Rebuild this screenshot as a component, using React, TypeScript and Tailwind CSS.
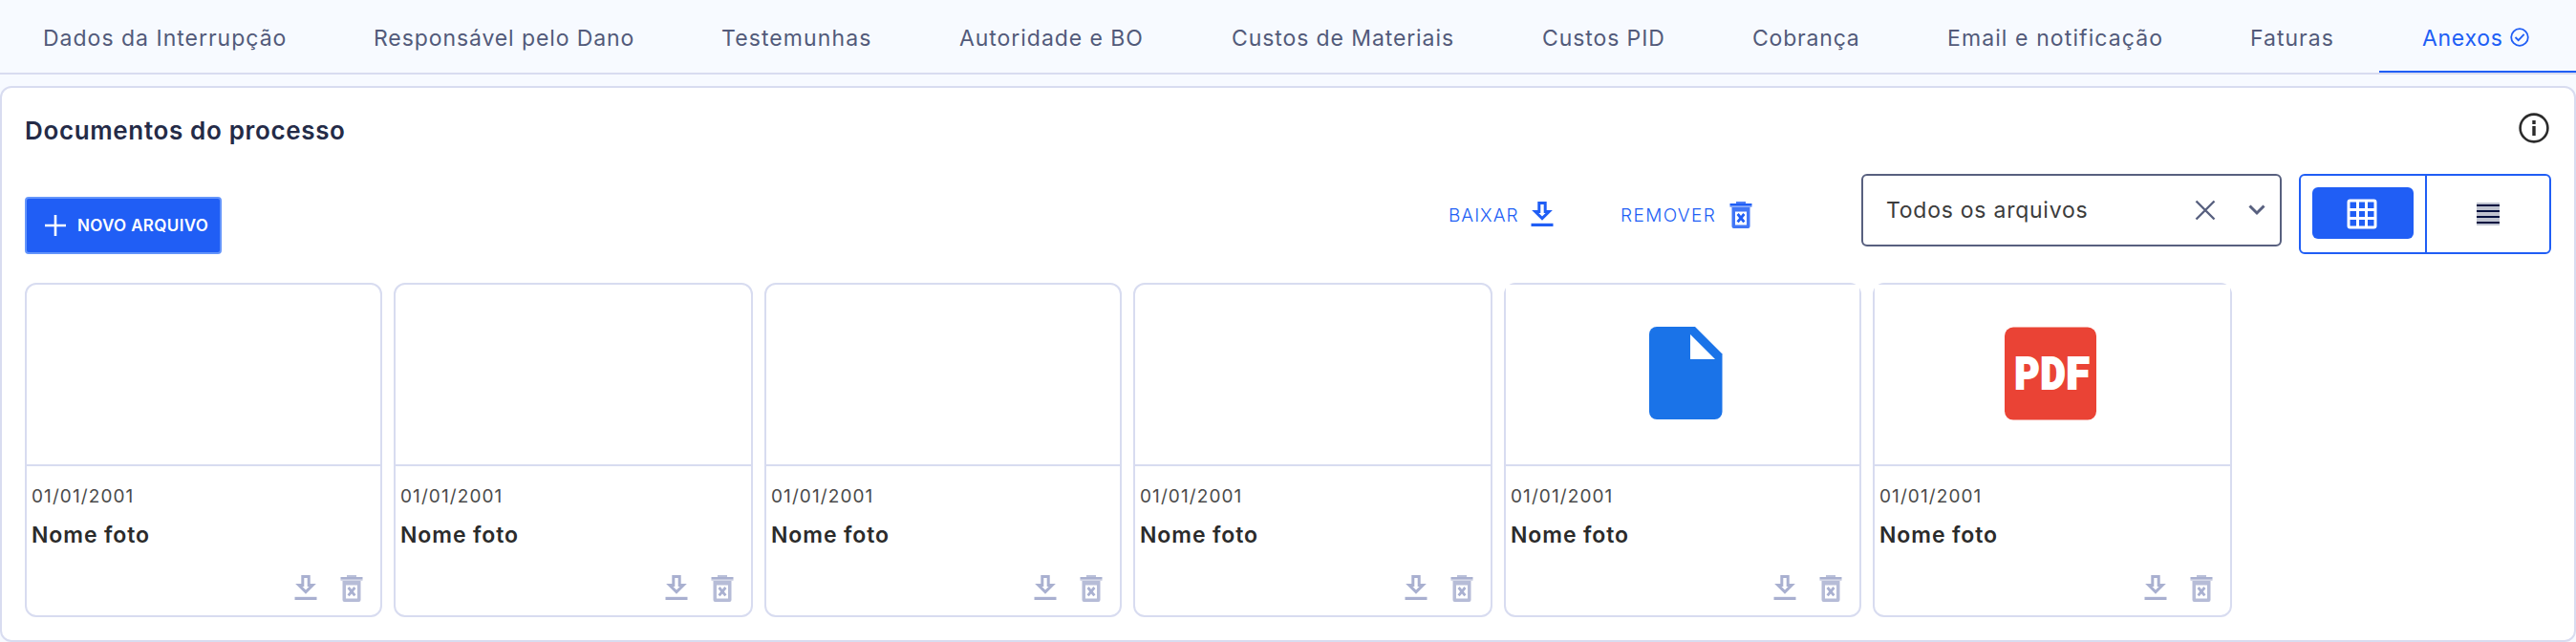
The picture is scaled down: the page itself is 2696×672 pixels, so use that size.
import { useState } from "react";
import clsx from "clsx";

const TABS = [
  { label: "Dados da Interrupção", width: "w-[346px]", tracking: "tracking-[1px]" },
  { label: "Responsável pelo Dano", width: "w-[364px]", tracking: "tracking-[0.9px]" },
  { label: "Testemunhas", width: "w-[249px]", tracking: "tracking-[1.1px]" },
  { label: "Autoridade e BO", width: "w-[285px]", tracking: "tracking-[0.95px]" },
  { label: "Custos de Materiais", width: "w-[325px]", tracking: "tracking-[0.9px]" },
  { label: "Custos PID", width: "w-[220px]", tracking: "tracking-[0.9px]" },
  { label: "Cobrança", width: "w-[204px]", tracking: "tracking-[0.8px]" },
  { label: "Email e notificação", width: "w-[317px]", tracking: "tracking-[1.1px]" },
  { label: "Faturas", width: "w-[180px]", tracking: "tracking-[1px]" },
  { label: "Anexos", width: "w-[206px]", tracking: "tracking-[0.7px]" },
];

type FileKind = "foto" | "doc" | "pdf";

const FILES: { id: number; kind: FileKind; date: string; name: string }[] = [
  { id: 1, kind: "foto", date: "01/01/2001", name: "Nome foto" },
  { id: 2, kind: "foto", date: "01/01/2001", name: "Nome foto" },
  { id: 3, kind: "foto", date: "01/01/2001", name: "Nome foto" },
  { id: 4, kind: "foto", date: "01/01/2001", name: "Nome foto" },
  { id: 5, kind: "doc", date: "01/01/2001", name: "Nome foto" },
  { id: 6, kind: "pdf", date: "01/01/2001", name: "Nome foto" },
];

function DownloadIcon() {
  return (
    <svg width="24" height="28" viewBox="0 0 24 28" fill="none" stroke="currentColor" strokeWidth="3">
      <path d="M8.8 1.5h6.4v9h4L12 17.6 4.8 10.5h4z" />
      <path d="M0.5 24.4h23" strokeWidth="3.2" />
    </svg>
  );
}

function TrashIcon() {
  return (
    <svg width="24" height="28" viewBox="0 0 24 28" fill="currentColor">
      <path d="M7 0h10v2H7z" fillOpacity="0.8" />
      <path d="M0.5 2h23v2.6h-23z" />
      <path d="M0.5 4.6h23V6h-23z" fillOpacity="0.5" />
      <path fillRule="evenodd" fillOpacity="0.85" d="M2.5 6h19v20a2 2 0 0 1-2 2h-15a2 2 0 0 1-2-2zM6 10.5v14h12v-14z" />
      <path d="M8.6 13l6.8 8.4M15.4 13l-6.8 8.4" stroke="currentColor" strokeWidth="2.8" />
    </svg>
  );
}

function DocIcon() {
  return (
    <svg width="77" height="98" viewBox="0 0 77 98">
      <path d="M8 0h40l28.5 28.5V89a8 8 0 0 1-8 8H8a8 8 0 0 1-8-8V8a8 8 0 0 1 8-8z" fill="#1a73e8" />
      <path d="M43 8v26h26z" fill="#fff" />
    </svg>
  );
}

function PdfIcon() {
  return (
    <svg width="96" height="98" viewBox="0 0 96 98" fontFamily="Roboto, sans-serif" fontWeight="900" fontSize="46">
      <rect y="0.6" width="96" height="97" rx="9" fill="#ea4335" />
      <g fill="#fff" stroke="#fff" strokeWidth="1.8">
        <text x="10.5" y="65" textLength="26" lengthAdjust="spacingAndGlyphs">P</text>
        <text x="37.5" y="65" textLength="26" lengthAdjust="spacingAndGlyphs">D</text>
        <text x="64.5" y="65" textLength="24" lengthAdjust="spacingAndGlyphs">F</text>
      </g>
    </svg>
  );
}

function FileCard({ kind, date, name }: { kind: FileKind; date: string; name: string }) {
  return (
    <div className="flex h-[350px] flex-col rounded-xl border-2 border-[#d8dcf0] odd:w-[374px] even:w-[376px]">
      <div className={clsx("flex h-[190px] items-center justify-center border-b-2 border-[#d8dcf0] pb-[2px]", kind === "doc" && "bg-white pl-[7px]", kind === "pdf" && "bg-white pr-1")}>
        {kind === "doc" && <DocIcon />}
        {kind === "pdf" && <PdfIcon />}
      </div>
      <div className="flex flex-1 flex-col pl-[5px] pr-[18px]">
        <span className="mt-4 text-[19px] leading-8 tracking-[1.1px] text-[#4a4a4a]">{date}</span>
        <span className="mt-2 text-[23px] font-semibold leading-8 tracking-[0.9px] text-[#2b2b2b]">{name}</span>
        <div className="mt-[26px] flex justify-end gap-6 text-[#a9b0d0]">
          <button><DownloadIcon /></button>
          <button><TrashIcon /></button>
        </div>
      </div>
    </div>
  );
}

export default function App() {
  const [activeTab, setActiveTab] = useState("Anexos");

  return (
    <div className="flex h-[672px] w-[2696px] flex-col bg-[#f7faff] font-['Inter',sans-serif]">
      <nav className="flex h-[78px] border-b-2 border-[#d8dcf0]">
        {TABS.map((tab) => {
          const isActive = tab.label === activeTab;

          return (
            <button
              key={tab.label}
              onClick={() => setActiveTab(tab.label)}
              className={clsx(
                "flex shrink-0 items-center whitespace-nowrap border-b-2 pl-[45px] text-[23px] leading-8",
                tab.width,
                tab.tracking,
                isActive ? "border-[#205ef5] text-[#205ef5]" : "border-transparent text-[#525a7a]"
              )}
            >
              <span className="mt-[5px]">{tab.label}</span>
              {isActive && (
                <svg className="ml-[7px] mt-1" width="20" height="20" viewBox="0 0 20 20" fill="none" stroke="currentColor" strokeWidth="1.8">
                  <circle cx="10" cy="10" r="8.8" />
                  <path d="M5.5 10l3.2 3.2 6-6.4" />
                </svg>
              )}
            </button>
          );
        })}
      </nav>

      <main className="mt-3 flex flex-1 flex-col rounded-xl border-2 border-[#d8dcf0] bg-white px-6">
        <div className="flex items-start justify-between">
          <h1 className="mt-[29px] text-[26px] font-semibold leading-8 tracking-[0.65px] text-[#242b47]">Documentos do processo</h1>
          <svg className="mr-[2px] mt-[26px]" width="32" height="32" viewBox="0 0 32 32" fill="none" stroke="#2b2b2b">
            <circle cx="16" cy="16" r="14.4" strokeWidth="2.6" />
            <path d="M16 8v4M16 14v10" strokeWidth="3.4" />
          </svg>
        </div>

        {/* Barra de ações */}
        <div className="mt-[29px] flex h-[86px] items-start">
          <button className="mt-6 flex h-[60px] w-[206px] items-center rounded border-2 border-[#6495fb] bg-[#205ef5] pl-[19px] text-white">
            <svg width="22" height="24" viewBox="0 0 22 24" stroke="currentColor" strokeWidth="2.6">
              <path d="M11 1v22M0 12h22" />
            </svg>
            <span className="ml-3 mt-[2px] text-[17px] font-semibold tracking-[0.35px]">NOVO ARQUIVO</span>
          </button>

          <button className="ml-[1284px] mt-[27px] flex h-8 items-center text-[#205ef5]">
            <span className="mt-[2px] w-[86px] text-left text-[19px] font-light tracking-[1px]">BAIXAR</span>
            <DownloadIcon />
          </button>
          <button className="ml-[70px] mt-[27px] flex h-8 items-center text-[#205ef5]">
            <span className="mt-[2px] w-[114px] text-left text-[19px] font-light tracking-[1.4px]">REMOVER</span>
            <TrashIcon />
          </button>

          <div className="ml-[114px] flex h-[76px] w-[440px] items-center rounded-md border-2 border-[#58607f] pl-6 text-[#58607f]">
            <span className="w-[323px] text-[23px] tracking-[0.75px] text-[#3c3c3c]">Todos os arquivos</span>
            <svg width="22" height="22" viewBox="0 0 22 22" stroke="currentColor" strokeWidth="2.4">
              <path d="M1.5 1.5l19 19M20.5 1.5l-19 19" />
            </svg>
            <svg className="ml-[34px]" width="18" height="12" viewBox="0 0 18 12" fill="none" stroke="currentColor" strokeWidth="3">
              <path d="M1.5 1.5L9 9l7.5-7.5" />
            </svg>
          </div>

          <div className="ml-[18px] flex h-[84px] w-[264px] rounded-md border-2 border-[#205ef5]">
            <div className="w-[132px] border-r-2 border-[#205ef5] pl-3 pt-3">
              <button className="flex h-[54px] w-[106px] items-center justify-center rounded-md bg-[#205ef5] text-white">
                <svg className="mr-[2px] mt-[2px]" width="32" height="32" viewBox="0 0 32 32" fill="none" stroke="currentColor" strokeWidth="3">
                  <rect x="2" y="2" width="28" height="28" rx="1.5" />
                  <path d="M11.5 2v28M20.5 2v28M2 11.5h28M2 20.5h28" />
                </svg>
              </button>
            </div>
            <button className="flex flex-1 items-center justify-center text-[#04103f]">
              <svg width="24" height="24" viewBox="0 0 24 24" stroke="currentColor" strokeWidth="2">
                <rect width="24" height="24" fill="#c0c3cf" stroke="none" />
                <path d="M0 3h24M0 9h24M0 15h24M0 21h24" />
              </svg>
            </button>
          </div>
        </div>

        <div className="mt-7 flex gap-3">
          {FILES.map((file) => (
            <FileCard key={file.id} kind={file.kind} date={file.date} name={file.name} />
          ))}
        </div>
      </main>
    </div>
  );
}
